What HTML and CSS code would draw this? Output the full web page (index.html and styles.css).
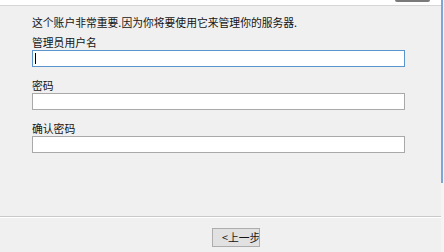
FILE: index.html
```html
<!DOCTYPE html>
<html lang="zh-CN">
<head>
    <meta charset="UTF-8">
    <title>管理员账户</title>
    <link rel="stylesheet" href="styles.css">
</head>
<body>
    <div class="window">
        <div class="main">
            <!-- top strip of the wizard header -->
            <div class="top-strip">
                <div class="top-tab"></div>
            </div>

            <div class="content">
                <p class="intro">这个账户非常重要.因为你将要使用它来管理你的服务器.</p>

                <div class="field">
                    <div class="label">管理员用户名</div>
                    <div class="textbox focused"><span class="caret"></span></div>
                </div>

                <div class="field">
                    <div class="label">密码</div>
                    <div class="textbox"></div>
                </div>

                <div class="field">
                    <div class="label">确认密码</div>
                    <div class="textbox"></div>
                </div>
            </div>

            <!-- wizard buttons -->
            <div class="footer">
                <button class="btn">&lt;上一步</button>
            </div>
        </div>

        <div class="edge">
            <div class="edge-thumb"></div>
        </div>
    </div>
</body>
</html>
```

FILE: styles.css
```css
html, body {
    margin: 0;
    padding: 0;
}
body {
    width: 444px;
    height: 252px;
    overflow: hidden;
    background-color: #f0f0f0;
    font-family: "Noto Sans CJK SC", "Noto Sans", sans-serif;
    font-size: 10.8px;
    color: #141414;
}
.window {
    display: flex;
    height: 252px;
}
.main {
    flex: 1;
    display: flex;
    flex-direction: column;
}
.top-strip {
    height: 5px;
    background: #ffffff;
    border-bottom: 1px solid #d6d6d6;
    display: flex;
    justify-content: flex-end;
    padding-right: 11px;
}
.top-tab {
    width: 35px;
    height: 2px;
    background: #7a7a7a;
    border-radius: 0 0 2px 2px;
}
.content {
    padding-left: 32px;
    width: 373px;
}
.intro {
    margin: 10px 0 0 0;
    line-height: 13px;
    white-space: nowrap;
}
.field {
    display: flex;
    flex-direction: column;
    gap: 1px;
    margin-top: 12px;
}
.field:first-of-type {
    margin-top: 7px;
}
.label {
    line-height: 13px;
}
.textbox {
    box-sizing: border-box;
    height: 17px;
    background: #ffffff;
    border: 1px solid #a9a9a9;
    display: flex;
    align-items: center;
    padding-left: 2px;
}
.textbox.focused {
    border-color: #5b94cc;
}
.caret {
    width: 1px;
    height: 11px;
    background: #000000;
}
.footer {
    margin-top: auto;
    height: 24px;
    border-top: 1px solid #c9c9c9;
    box-shadow: inset 0 1px 0 #ffffff;
    padding: 11px 0 0 212px;
}
.btn {
    box-sizing: border-box;
    width: 48px;
    height: 19px;
    padding: 0 0 0 9px;
    text-align: left;
    white-space: nowrap;
    overflow: hidden;
    background: #e1e1e1;
    border: 1px solid #adadad;
    font-family: "Noto Sans CJK SC", "Noto Sans", sans-serif;
    font-size: 10.8px;
    line-height: 15px;
    color: #141414;
}
.edge {
    width: 3px;
    background: #f4f4f4;
}
.edge-thumb {
    width: 2px;
    height: 183px;
    background: #7ba8d6;
}
```
